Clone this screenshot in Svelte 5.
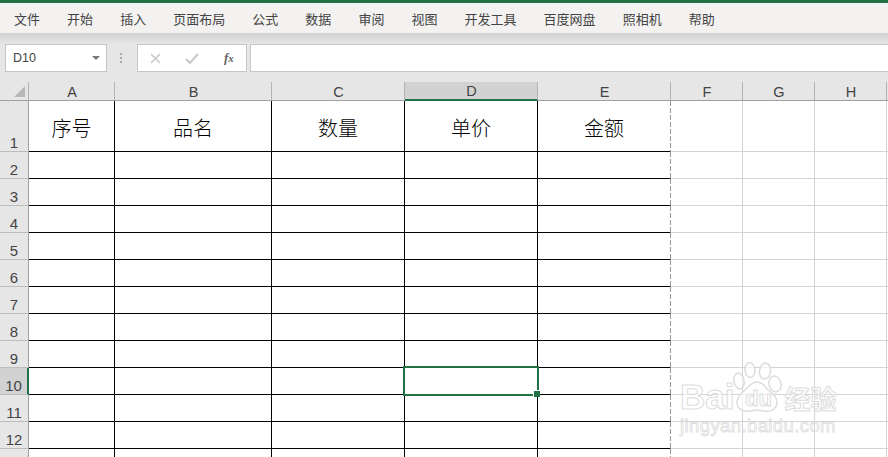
<script lang="ts">
	// Spreadsheet window: ribbon tabs, formula bar and a sheet with one selected cell.
	const tabs = ['文件', '开始', '插入', '页面布局', '公式', '数据', '审阅', '视图', '开发工具', '百度网盘', '照相机', '帮助'];

	const columns = ['A', 'B', 'C', 'D', 'E', 'F', 'G', 'H', ''];
	const titles = ['序号', '品名', '数量', '单价', '金额'];
	const rows = Array.from({ length: 13 }, (_, i) => i + 1);

	const selCol = 3;
	const selRow = 10;
</script>

<div class="window">
	<div class="topline"></div>

	<nav class="tabs">
		{#each tabs as tab}
			<span>{tab}</span>
		{/each}
	</nav>

	<div class="formula-bar">
		<div class="name-box">
			<span>D10</span>
			<i class="caret"></i>
		</div>
		<div class="grip"><b></b><b></b><b></b></div>
		<div class="fx-box">
			<svg width="11" height="11" viewBox="0 0 11 11" stroke="#c8c8c8" stroke-width="1.6" fill="none">
				<path d="M1 1l9 9M10 1l-9 9" />
			</svg>
			<svg width="14" height="11" viewBox="0 0 14 11" stroke="#c8c8c8" stroke-width="2" fill="none">
				<path d="M1 6l4 4 8-9" />
			</svg>
			<span class="fx">f<small>x</small></span>
		</div>
		<div class="input"></div>
	</div>

	<div class="sheet">
		<div class="corner"><i></i></div>
		{#each columns as col, c}
			<div class="col-head" class:sel={c === selCol}>{col}</div>
		{/each}

		{#each rows as row}
			<div class="row-head" class:sel={row === selRow}>{row < 13 ? row : ''}</div>
			{#each columns as _, c}
				<div class="cell" class:ruled={c < 5} class:edge={c === 4}>
					{#if row === 1 && c < 5}{titles[c]}{/if}
					{#if row === selRow && c === selCol}
						<div class="selection"><i></i></div>
					{/if}
				</div>
			{/each}
		{/each}
	</div>

	<div class="watermark">
		<svg class="paw" width="50" height="52" viewBox="0 0 50 52" fill="rgba(255,255,255,.6)" stroke="#dcdcdc" stroke-width="1.5">
			<ellipse cx="6" cy="19" rx="5" ry="8" transform="rotate(-12 6 19)" />
			<ellipse cx="17" cy="8" rx="5" ry="7.5" transform="rotate(-6 17 8)" />
			<ellipse cx="32" cy="9" rx="5.5" ry="8" transform="rotate(8 32 9)" />
			<ellipse cx="42" cy="22" rx="6" ry="8" transform="rotate(-14 42 22)" />
			<path d="M24 20c5 0 8 4 10 7 3 3 10 6 10 13 0 7-6 10-12 9-3 0-5-1-8-1s-5 1-9 1c-6 1-11-3-11-9 0-6 6-10 9-13 3-3 6-7 11-7z" />
		</svg>
		<em class="du">du</em>
		<div class="brand"><span>Bai</span><strong>经验</strong></div>
		<div class="site">jingyan.baidu.com</div>
	</div>
</div>

<style>
	:global(body) {
		margin: 0;
		background: #fff;
	}

	.window {
		position: relative;
		width: 888px;
		height: 457px;
		overflow: hidden;
		font-family: "Noto Sans CJK SC", "Liberation Sans", sans-serif;
	}

	.topline {
		height: 3px;
		background: #217346;
	}

	.tabs {
		display: flex;
		align-items: center;
		gap: 27.05px;
		height: 30px;
		padding-left: 14px;
		background: #f3f2f1;
		color: #444;
		font-size: 13px;
	}

	.formula-bar {
		display: flex;
		align-items: stretch;
		height: 28px;
		padding: 11px 0 10px 5px;
		background: linear-gradient(#d2d2d2, #e6e6e6 11px);
	}

	.name-box {
		box-sizing: border-box;
		display: flex;
		align-items: center;
		justify-content: space-between;
		width: 102px;
		padding: 0 6px 0 7px;
		background: #fff;
		border: 1px solid #c6c6c6;
		color: #444;
		font: 12.5px "Liberation Sans", sans-serif;
	}

	.caret {
		width: 0;
		height: 0;
		border-left: 4px solid transparent;
		border-right: 4px solid transparent;
		border-top: 4px solid #777;
	}

	.grip {
		display: flex;
		flex-direction: column;
		justify-content: center;
		gap: 2px;
		width: 3px;
		margin: 0 14px 0 13px;
	}
	.grip b {
		width: 2px;
		height: 2px;
		background: #aaa;
	}

	.fx-box {
		box-sizing: border-box;
		display: flex;
		align-items: center;
		gap: 24px;
		width: 110px;
		padding-left: 12px;
		background: #fff;
		border: 1px solid #c6c6c6;
	}

	.fx {
		font: italic bold 13px "Liberation Serif", serif;
		color: #666;
		margin-left: 1px;
	}
	.fx small {
		font-size: 11px;
	}

	.input {
		flex: 1;
		margin-left: 3px;
		background: #fff;
		border: 1px solid #c6c6c6;
		border-right: 0;
	}

	.sheet {
		display: grid;
		grid-template-columns: 29px 86px 157px 133px 133px 133px 72px 72px 72px 1fr;
		grid-template-rows: 19px 51px repeat(12, 27px);
	}

	.corner {
		position: relative;
		background: #e6e6e6;
		border-right: 1px solid #b4b4b4;
		border-bottom: 1px solid #a0a0a0;
	}
	.corner i {
		position: absolute;
		left: 14px;
		bottom: 3px;
		width: 0;
		height: 0;
		border-left: 11px solid transparent;
		border-bottom: 11px solid #b8b8b8;
	}

	.col-head,
	.row-head {
		box-sizing: border-box;
		background: #e6e6e6;
		color: #444;
		font: 14.5px "Liberation Sans", sans-serif;
	}

	.col-head {
		display: flex;
		align-items: center;
		justify-content: center;
		padding-top: 1px;
		padding-left: 1px;
		border-right: 1px solid #b4b4b4;
		border-bottom: 1px solid #a0a0a0;
	}
	.col-head:last-child {
		border-right: 0;
	}
	.col-head.sel {
		background: #d2d2d2;
		border-bottom: 2px solid #217346;
	}

	.row-head {
		display: flex;
		align-items: flex-end;
		justify-content: center;
		font-size: 15px;
		line-height: 14px;
		padding-bottom: 1px;
		border-right: 1px solid #a0a0a0;
		border-bottom: 1px solid #bdbdbd;
	}
	.row-head.sel {
		background: #d2d2d2;
		border-right: 2px solid #217346;
	}

	.cell {
		position: relative;
		box-sizing: border-box;
		display: flex;
		align-items: center;
		justify-content: center;
		padding-top: 2px;
		border-right: 1px solid #d4d4d4;
		border-bottom: 1px solid #d4d4d4;
		color: #000;
		font-size: 20px;
		font-weight: 300;
	}
	.cell.ruled {
		border-right-color: #000;
		border-bottom-color: #000;
	}
	/* print-area edge: longer dashes than border-style dashed gives */
	.cell.edge {
		border-right-color: transparent;
		background-clip: padding-box;
	}
	.cell.edge::after {
		content: "";
		position: absolute;
		top: 0;
		bottom: -1px;
		right: -1px;
		width: 1px;
		background: repeating-linear-gradient(#999 0 5px, transparent 5px 7px);
	}

	.selection {
		position: absolute;
		left: -2px;
		top: -2px;
		width: 136px;
		height: 30px;
		box-sizing: border-box;
		border: 2px solid #217346;
		z-index: 2;
	}
	.selection i {
		position: absolute;
		right: -3px;
		bottom: -3px;
		box-sizing: border-box;
		background: #217346;
		border: 1px solid #fff;
		border-right: 0;
		border-bottom: 0;
		width: 7px;
		height: 7px;
	}

	.watermark {
		position: absolute;
		left: 680px;
		top: 362px;
		width: 170px;
		height: 80px;
	}

	.paw {
		position: absolute;
		left: 53px;
		top: 0;
	}

	.du {
		position: absolute;
		left: 65px;
		top: 24px;
		font: bold 22px "Liberation Sans", sans-serif;
		color: rgba(255, 255, 255, 0.7);
		-webkit-text-stroke: 1px #dcdcdc;
	}

	.brand {
		position: absolute;
		left: 0;
		top: 15px;
		display: flex;
		align-items: baseline;
		gap: 50px;
		font: bold 35px "Liberation Sans", sans-serif;
		color: rgba(255, 255, 255, 0.6);
		-webkit-text-stroke: 1px #dcdcdc;
	}
	.brand strong {
		font: bold 26px "Noto Sans CJK SC", sans-serif;
		-webkit-text-stroke: 1px #dcdcdc;
	}

	.site {
		position: absolute;
		left: 0;
		top: 53px;
		font: 18.5px "Liberation Sans", sans-serif;
		letter-spacing: 0.4px;
		color: rgba(255, 255, 255, 0.6);
		-webkit-text-stroke: 0.8px #dcdcdc;
	}
</style>
